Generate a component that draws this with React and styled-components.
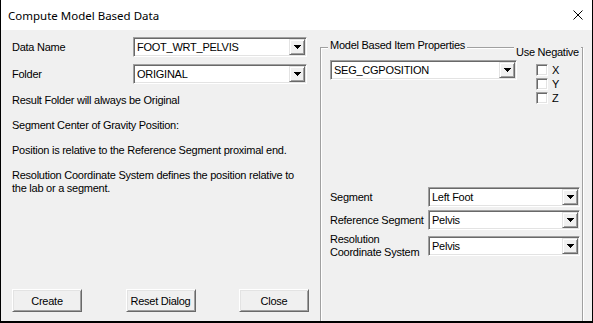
import React from 'react';
import styled, { createGlobalStyle } from 'styled-components';

const GlobalStyle = createGlobalStyle`
    html, body {
        margin: 0;
        padding: 0;
        background: #fff;
    }

    body {
        font-family: "Liberation Sans", Arial, sans-serif;
        font-size: 11px;
        letter-spacing: -0.25px;
        color: #000;
    }
`;

// little black down arrow of a combo button
function DownArrow() {
    return (
        <svg width="7" height="4" viewBox="0 0 7 4">
            <path d="M0 0h7v1H0z M1 1h5v1H1z M2 2h3v1H2z M3 3h1v1H3z" fill="#000" />
        </svg>
    );
}

function CloseIcon() {
    return (
        <svg width="10" height="10" viewBox="0 0 10 10">
            <path d="M0.5 0.5L9.5 9.5M9.5 0.5L0.5 9.5" stroke="#000" strokeWidth="1" />
        </svg>
    );
}

function Combo({ value, width }) {
    return (
        <ComboBox $width={width}>
            <ComboText>{value}</ComboText>
            <DropButton>
                <DownArrow />
            </DropButton>
        </ComboBox>
    );
}

function App() {
    return (
        <>
            <GlobalStyle />
            <Window>
                <TitleBar>
                    <span>Compute Model Based Data</span>
                    <CloseIcon />
                </TitleBar>

                <Body>
                    <LeftPane>
                        <Row>
                            <Label>Data Name</Label>
                            <Combo value="FOOT_WRT_PELVIS" width={174} />
                        </Row>
                        <Row>
                            <Label>Folder</Label>
                            <Combo value="ORIGINAL" width={174} />
                        </Row>

                        <Notes>
                            <p>Result Folder will always be Original</p>
                            <p>Segment Center of Gravity Position:</p>
                            <p>Position is relative to the Reference Segment proximal end.</p>
                            <p>
                                Resolution Coordinate System defines the position relative to
                                <br />
                                the lab or a segment.
                            </p>
                        </Notes>

                        <ButtonBar>
                            <PushButton>Create</PushButton>
                            <PushButton>Reset Dialog</PushButton>
                            <PushButton>Close</PushButton>
                        </ButtonBar>
                    </LeftPane>

                    <RightPane>
                        <GroupBox>
                            <Caption>Model Based Item Properties</Caption>
                            <NegativeCaption>Use Negative</NegativeCaption>

                            <TopRow>
                                <Combo value="SEG_CGPOSITION" width={187} />
                                <CheckList>
                                    {['X', 'Y', 'Z'].map(axis => (
                                        <CheckItem key={axis}>
                                            <CheckBox />
                                            {axis}
                                        </CheckItem>
                                    ))}
                                </CheckList>
                            </TopRow>

                            <FormGrid>
                                <span>Segment</span>
                                <Combo value="Left Foot" width={152} />
                                <span>Reference Segment</span>
                                <Combo value="Pelvis" width={152} />
                                <span>Resolution<br />Coordinate System</span>
                                <Combo value="Pelvis" width={152} />
                            </FormGrid>
                        </GroupBox>
                    </RightPane>
                </Body>
            </Window>
        </>
    );
}

const Window = styled.div`
    width: 593px;
    height: 323px;
    box-sizing: border-box;
    border: 1px solid #000;
    border-top: none;
    border-bottom-width: 2px;
    display: flex;
    flex-direction: column;
    background: #f0f0f0;
    overflow: hidden;
`;

const TitleBar = styled.div`
    height: 30px;
    flex: none;
    background: #fff;
    display: flex;
    align-items: center;
    justify-content: space-between;
    padding: 0 9px 0 7px;
    font-family: "Noto Sans", "Liberation Sans", sans-serif;
    font-size: 11.5px;
    letter-spacing: 0;
`;

const Body = styled.div`
    flex: 1;
    min-height: 0;
    display: flex;
    overflow: hidden;
`;

const LeftPane = styled.div`
    width: 319px;
    flex: none;
    box-sizing: border-box;
    padding: 7px 0 9px 11px;
    display: flex;
    flex-direction: column;
`;

const Row = styled.div`
    display: flex;
    align-items: center;
    height: 20px;
    margin-bottom: 7px;
`;

const Label = styled.span`
    width: 121px;
    flex: none;
`;

const Notes = styled.div`
    margin-top: 3px;
    line-height: 13px;

    p {
        margin: 0 0 12px;
    }
`;

const ButtonBar = styled.div`
    margin-top: auto;
    width: 297px;
    display: flex;
    justify-content: space-between;
`;

const PushButton = styled.button`
    width: 70px;
    height: 23px;
    padding: 0;
    font: inherit;
    letter-spacing: inherit;
    color: #000;
    background: #f0f0f0;
    border: 1px solid;
    border-color: #fff #696969 #696969 #fff;
    box-shadow: inset 1px 1px 0 #e3e3e3, inset -1px -1px 0 #a0a0a0;
`;

const ComboBox = styled.div`
    width: ${p => p.$width}px;
    height: 20px;
    flex: none;
    box-sizing: border-box;
    display: flex;
    background: #fff;
    border: 1px solid;
    border-color: #a0a0a0 #fff #fff #a0a0a0;
    box-shadow: inset 1px 1px 0 #696969, inset -1px -1px 0 #e3e3e3;
    padding: 1px;
`;

const ComboText = styled.span`
    flex: 1;
    padding-left: 2px;
    line-height: 16px;
    white-space: nowrap;
    overflow: hidden;
`;

const DropButton = styled.span`
    width: 16px;
    flex: none;
    box-sizing: border-box;
    background: #f0f0f0;
    border: 1px solid;
    border-color: #e3e3e3 #696969 #696969 #e3e3e3;
    box-shadow: inset 1px 1px 0 #fff, inset -1px -1px 0 #a0a0a0;
    display: flex;
    align-items: center;
    justify-content: center;
`;

const RightPane = styled.div`
    flex: 1;
    padding-top: 17px;
`;

const GroupBox = styled.div`
    position: relative;
    width: 263px;
    height: 300px;
    box-sizing: border-box;
    border: 1px solid #a0a0a0;
    box-shadow: inset 1px 1px 0 #fff, 1px 1px 0 #fff;
    padding: 12px 0 0 9px;
`;

const Caption = styled.span`
    position: absolute;
    top: -9px;
    left: 7px;
    padding: 0 2px;
    line-height: 13px;
    background: #f0f0f0;
`;

const NegativeCaption = styled.span`
    position: absolute;
    top: -2px;
    right: 1px;
    padding: 0 2px;
    line-height: 13px;
    background: #f0f0f0;
`;

const TopRow = styled.div`
    display: flex;
    align-items: flex-start;
    height: 41px;
`;

const CheckList = styled.div`
    margin: 3px 0 0 19px;
    display: flex;
    flex-direction: column;
`;

const CheckItem = styled.label`
    display: flex;
    align-items: center;
    gap: 4px;
    height: 14px;
`;

const CheckBox = styled.span`
    width: 12px;
    height: 12px;
    box-sizing: border-box;
    background: #fff;
    border: 1px solid;
    border-color: #a0a0a0 #fff #fff #a0a0a0;
    box-shadow: inset 1px 1px 0 #696969, inset -1px -1px 0 #e3e3e3;
`;

const FormGrid = styled.div`
    margin-top: 86px;
    display: grid;
    grid-template-columns: 98px 152px;
    row-gap: 3px;
    align-items: center;
    line-height: 13px;
`;

export default App;
